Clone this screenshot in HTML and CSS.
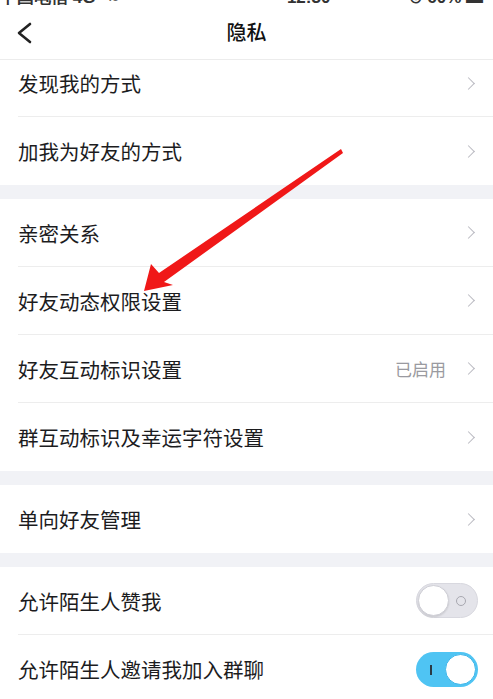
FILE: index.html
```html
<!DOCTYPE html>
<html lang="zh">
<head>
<meta charset="utf-8">
<title>隐私</title>
<link rel="stylesheet" href="styles.css">
</head>
<body>
<div class="page">
  <div class="status">
    <span class="st-left">中国电信 4G <span class="st-small">46</span></span>
    <span class="st-mid">12:30</span>
    <span class="st-right">⊙ 60% ▬</span>
  </div>
  <div class="nav">
    <svg class="back" width="16" height="22" viewBox="0 0 16 22"><polyline points="13,2 2,11 13,20" fill="none" stroke="#222" stroke-width="2.6" stroke-linecap="round" stroke-linejoin="round"/></svg>
    <div class="title">隐私</div>
  </div>

  <div class="group">
    <div class="row first"><div class="inner"><span class="label">发现我的方式</span><span class="chev"></span></div></div>
    <div class="row"><div class="inner"><span class="label">加我为好友的方式</span><span class="chev"></span></div></div>
  </div>
  <div class="gap"></div>
  <div class="group">
    <div class="row"><div class="inner"><span class="label">亲密关系</span><span class="chev"></span></div></div>
    <div class="row"><div class="inner"><span class="label">好友动态权限设置</span><span class="chev"></span></div></div>
    <div class="row"><div class="inner"><span class="label">好友互动标识设置</span><span class="value">已启用</span><span class="chev"></span></div></div>
    <div class="row"><div class="inner"><span class="label">群互动标识及幸运字符设置</span><span class="chev"></span></div></div>
  </div>
  <div class="gap"></div>
  <div class="group">
    <div class="row"><div class="inner"><span class="label">单向好友管理</span><span class="chev"></span></div></div>
  </div>
  <div class="gap"></div>
  <div class="group">
    <div class="row"><div class="inner"><span class="label">允许陌生人赞我</span>
      <span class="toggle off"><span class="mark-o"></span><span class="knob"></span></span></div></div>
    <div class="row"><div class="inner"><span class="label">允许陌生人邀请我加入群聊</span>
      <span class="toggle on"><span class="mark-i"></span><span class="knob"></span></span></div></div>
  </div>

  <svg class="arrow" width="493" height="699" viewBox="0 0 493 699">
    <polygon fill="#f01818" points="144,291 151,264 159,273 341,149 343,153 164,282 173,285"/>
  </svg>
</div>
</body>
</html>
```

FILE: styles.css
```css
* { box-sizing: border-box; }
html, body { margin: 0; padding: 0; background: #fff; }
body {
  font-family: "Noto Sans CJK SC", "Noto Sans", sans-serif;
  color: #1c1c1e;
}
.page {
  position: relative;
  width: 493px;
  height: 699px;
  overflow: hidden;
  background: #fff;
}
.status {
  height: 5px;
  overflow: hidden;
  display: flex;
  justify-content: space-between;
  align-items: flex-end;
  padding: 0 10px 0 0;
  font-family: "Liberation Sans", sans-serif;
  font-size: 17px;
  line-height: 17px;
  font-weight: bold;
  color: #333;
}
.status span { display: block; margin-bottom: -1px; }
.st-left { display: flex !important; gap: 10px; }
.st-small { font-size: 12px; color: #666; }
.st-mid { margin-left: 90px; }
.nav {
  height: 55px;
  position: relative;
  display: flex;
  align-items: center;
  justify-content: center;
  border-bottom: 1px solid #ececec;
}
.back {
  position: absolute;
  left: 17px;
  top: 17px;
}
.title {
  font-size: 20px;
  font-weight: 500;
  color: #111;
  margin-top: -2px;
}
.group { background: #fff; }
.gap { height: 14px; background: #f1f2f6; }
.row {
  height: 68px;
  padding-left: 18px;
  display: flex;
}
.row.first { height: 57px; }
.inner {
  flex: 1;
  display: flex;
  align-items: center;
  padding-right: 16px;
  border-bottom: 1px solid #ededed;
}
.row.first .inner { padding-bottom: 10px; }
.row:last-child .inner { border-bottom: none; }
.label {
  flex: 1;
  font-size: 20.5px;
  line-height: 28px;
  color: #1c1c1e;
}
.value {
  font-size: 17px;
  color: #9a9aa0;
  margin-right: 18px;
}
.chev {
  width: 9px;
  height: 9px;
  border-top: 1.6px solid #b9b9c1;
  border-right: 1.6px solid #b9b9c1;
  transform: rotate(45deg);
  margin-right: 4px;
}
.toggle {
  position: relative;
  width: 62px;
  height: 35px;
  border-radius: 18px;
  margin-right: -1px;
}
.toggle.off {
  background: #e4e4ea;
  border: 1px solid #d8d8df;
}
.toggle.on {
  background: #4fc4f3;
}
.knob {
  position: absolute;
  top: 1px;
  width: 31px;
  height: 31px;
  border-radius: 50%;
  background: #fff;
}
.toggle.off .knob {
  left: 1px;
  border: 1px solid #cfcfd6;
  box-shadow: 0 1px 2px rgba(0,0,0,0.12);
}
.toggle.on .knob {
  right: 2px;
  top: 2px;
  width: 31px;
  height: 31px;
  border: 1.5px solid #3fb6ea;
}
.mark-o {
  position: absolute;
  right: 11px;
  top: 12px;
  width: 10px;
  height: 10px;
  border-radius: 50%;
  border: 1.3px solid #a8a8b0;
}
.mark-i {
  position: absolute;
  left: 14px;
  top: 13px;
  width: 2px;
  height: 10px;
  background: #2a3a44;
}
.arrow {
  position: absolute;
  left: 0;
  top: 0;
  pointer-events: none;
}
```
